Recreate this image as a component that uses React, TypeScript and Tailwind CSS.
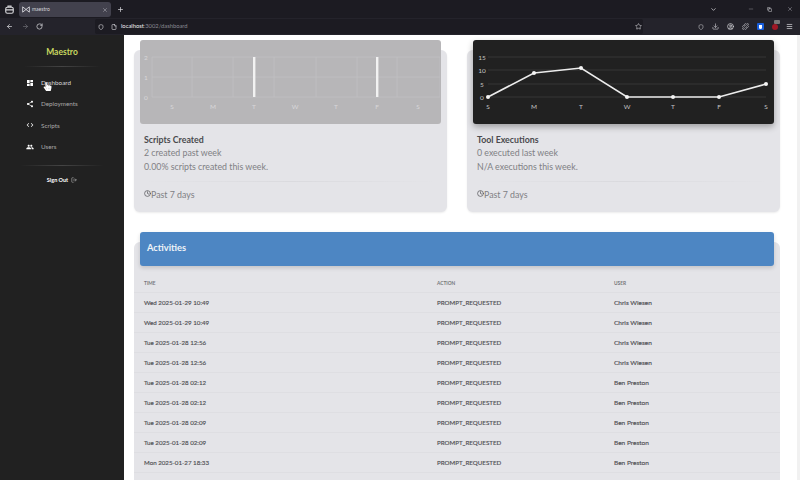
import { ArrowLeft, ArrowRight, RotateCw, Shield, File, Star, Plus, X, ChevronDown, Minus, Copy, Download, Puzzle, Menu, LogOut, Clock, CircleUser } from 'lucide-react';
import { MdDashboard, MdShare, MdCode, MdPeople } from 'react-icons/md';
import { FaHandPointer } from 'react-icons/fa';

const days = ['S', 'M', 'T', 'W', 'T', 'F', 'S'];

const rows = [
    ['Wed 2025-01-29 10:49', 'PROMPT_REQUESTED', 'Chris Wiesen'],
    ['Wed 2025-01-29 10:49', 'PROMPT_REQUESTED', 'Chris Wiesen'],
    ['Tue 2025-01-28 12:56', 'PROMPT_REQUESTED', 'Chris Wiesen'],
    ['Tue 2025-01-28 12:56', 'PROMPT_REQUESTED', 'Chris Wiesen'],
    ['Tue 2025-01-28 02:12', 'PROMPT_REQUESTED', 'Ben Preston'],
    ['Tue 2025-01-28 02:12', 'PROMPT_REQUESTED', 'Ben Preston'],
    ['Tue 2025-01-28 02:09', 'PROMPT_REQUESTED', 'Ben Preston'],
    ['Tue 2025-01-28 02:09', 'PROMPT_REQUESTED', 'Ben Preston'],
    ['Mon 2025-01-27 18:33', 'PROMPT_REQUESTED', 'Ben Preston'],
    ['Mon 2025-01-27 18:31', 'DEPLOYMENT_MODIFIED', 'Ben Preston'],
];

const navItems = [
    { label: 'Dashboard', Icon: MdDashboard },
    { label: 'Deployments', Icon: MdShare },
    { label: 'Scripts', Icon: MdCode },
    { label: 'Users', Icon: MdPeople },
];

function BrowserChrome() {
    return (
        <div className="h-[35px] shrink-0 bg-[#1c1b22] text-[#d6d6da]">
            <div className="h-[18px] flex items-center">
                <div className="w-[19px] flex justify-center">
                    <svg width="9" height="9" viewBox="0 0 12 12" fill="none" stroke="#d6d6da" strokeWidth="1.5">
                        <rect x="1" y="3" width="10" height="8" rx="2" />
                        <path d="M4 3V1.5h4V3M1 6.5h10" />
                    </svg>
                </div>
                <div className="w-[92px] h-[15px] mt-[1px] bg-[#42414d] rounded-[3px] flex items-center px-[3px] gap-[2px]">
                    <svg width="8" height="7" viewBox="0 0 12 10" fill="none" stroke="#e8e8ec" strokeWidth="1.2">
                        <path d="M1 1v8l10-8v8z" />
                    </svg>
                    <span className="text-[5px] flex-1">maestro</span>
                    <X size={6} strokeWidth={2} className="text-[#b9b9c0]" />
                </div>
                <Plus size={7} strokeWidth={2.5} className="ml-[6px]" />
                <div className="flex-1" />
                <ChevronDown size={7} strokeWidth={2.5} className="mr-[31px]" />
                <Minus size={6} className="mr-[13px] text-[#8f8f96]" />
                <Copy size={5} strokeWidth={2.5} className="mr-[15px]" />
                <X size={6} className="mr-[7px] text-[#a5a5ac]" />
            </div>
            <div className="h-[17px] bg-[#24232b] flex items-center">
                <ArrowLeft size={7} strokeWidth={2.5} className="ml-[6px]" />
                <ArrowRight size={7} strokeWidth={2.5} className="ml-[9px] text-[#6c6b72]" />
                <RotateCw size={7} strokeWidth={2.5} className="ml-[7px]" />
                <div className="ml-[52px] w-[548px] h-[15px] bg-[#1c1b22] rounded-[2px] flex items-center px-[3px]">
                    <Shield size={6} strokeWidth={2.5} />
                    <File size={6} strokeWidth={2.5} className="ml-[7px]" />
                    <span className="ml-[4px] text-[5.8px] text-[#f0f0f2]">
                        localhost<span className="text-[#8a8a92]">:3002/dashboard</span>
                    </span>
                    <div className="flex-1" />
                    <Star size={7} strokeWidth={2} className="mr-[-2px]" />
                </div>
                <div className="flex-1 flex items-center justify-end gap-[8px] pr-[7px]">
                    <Shield size={6} strokeWidth={2.5} className="text-[#b8b8be]" />
                    <Download size={7} strokeWidth={2} />
                    <CircleUser size={7} strokeWidth={2.5} />
                    <Puzzle size={7} strokeWidth={2} />
                    <div className="w-[7px] h-[7px] rounded-[1px] bg-[#175ddc] flex items-center justify-center">
                        <div className="w-[3px] h-[4px] bg-white rounded-b-[2px]" />
                    </div>
                    <div className="relative w-[6px] h-[6px] rounded-full bg-[#a01825]">
                        <div className="absolute -top-[4px] left-[2px] w-[6px] h-[4px] bg-[#777] rounded-[1px]" />
                    </div>
                    <Menu size={7} strokeWidth={2.5} />
                </div>
            </div>
        </div>
    );
}

function Sidebar() {
    return (
        <aside className="relative w-[124px] shrink-0 bg-[#212121] text-white">
            <div className="pt-[11px] text-center text-[8.5px] font-bold text-[#c8d860] leading-[12px]">Maestro</div>
            <div className="mx-[24px] mt-[8px] h-px bg-linear-to-r from-transparent via-[#444444] to-transparent" />
            <nav className="mt-[5px] flex flex-col pl-[26px]">
                {navItems.map(({ label, Icon }) => (
                    <div key={label} className="h-[21.3px] flex items-center gap-[7px]">
                        <Icon size={8} className="shrink-0" />
                        <span className={`text-[6.3px] ${label === 'Dashboard' ? 'text-[#d8d8d8]' : 'text-[#a8a8a8]'}`}>{label}</span>
                    </div>
                ))}
            </nav>
            <div className="mx-[20px] mt-[8px] h-px bg-linear-to-r from-transparent via-[#444444] to-transparent" />
            <div className="mt-[10px] flex items-center justify-center gap-[3px] text-[5.5px] font-bold">
                Sign Out
                <LogOut size={6} className="text-[#c8c8c8]" />
            </div>
            <FaHandPointer size={9} className="absolute left-[43px] top-[47px] text-white" />
        </aside>
    );
}

function StatCard({ title, lines, chart }: { title: string; lines: string[]; chart: React.ReactNode }) {
    return (
        <div className="mt-[15px] h-[162px] bg-[#e4e4e8] rounded-[6px] shadow-[0_1px_2px_rgba(0,0,0,0.08)] px-[6px]">
            {chart}
            <div className="px-[4px] pt-[10px]">
                <h3 className="text-[8.8px] leading-[12px] font-bold text-[#4a4a4e]">{title}</h3>
                <p className="text-[8.8px] leading-[13.5px] text-[#808084]">{lines[0]}</p>
                <p className="text-[8.8px] leading-[13.5px] text-[#808084]">{lines[1]}</p>
                <div className="mt-[7.5px] h-px bg-linear-to-r from-transparent via-[#dadade] to-transparent" />
                <div className="mt-[6px] flex items-center text-[8.8px] leading-[13px] text-[#808084]">
                    <Clock size={7} strokeWidth={2.5} className="-mt-[2px] text-[#55555a]" />
                    Past 7 days
                </div>
            </div>
        </div>
    );
}

function BarChart() {
    const gridX = [12, 52, 93, 134, 176, 217, 257, 300];
    const labelX = [32, 73, 114, 155, 196, 237, 278];
    return (
        <div className="relative -top-[10px] h-[84px] -mb-[10px] bg-[#b7b6b8] rounded-[3px]">
            <svg width="300" height="84" className="block">
                {[17, 37, 57].map(y => (
                    <line key={y} x1="12" x2="300" y1={y} y2={y} stroke="#c2c1c3" strokeWidth="0.7" />
                ))}
                {gridX.map(x => (
                    <line key={x} x1={x} x2={x} y1="17" y2="57" stroke="#c2c1c3" strokeWidth="0.7" />
                ))}
                <rect x="113" y="17" width="2.4" height="40" fill="#f2f2f2" />
                <rect x="236" y="17" width="2.4" height="40" fill="#f2f2f2" />
                {[['2', 20], ['1', 40], ['0', 60]].map(([t, y]) => (
                    <text key={t} x="6" y={y} fontSize="6.5" fill="#d8d7d9" textAnchor="middle">{t}</text>
                ))}
                {days.map((d, i) => (
                    <text key={i} x={labelX[i]} y="69" fontSize="6.5" fill="#d8d7d9" textAnchor="middle">{d}</text>
                ))}
            </svg>
        </div>
    );
}

function LineChart() {
    const xs = [15, 61, 108, 154, 200, 246, 293];
    const ys = [57, 33, 28, 57, 57, 57, 44];
    const points = xs.map((x, i) => `${x},${ys[i]}`).join(' ');
    return (
        <div className="relative -top-[10px] h-[84px] -mb-[10px] bg-[#212121] rounded-[3px] shadow-[0_3px_6px_rgba(0,0,0,0.3)]">
            <svg width="300" height="84" className="block">
                {[17, 30, 44, 57].map(y => (
                    <line key={y} x1="15" x2="293" y1={y} y2={y} stroke="#3c3c3c" strokeWidth="0.8" />
                ))}
                {[['15', 20], ['10', 33], ['5', 47], ['0', 60]].map(([t, y]) => (
                    <text key={t} x="9" y={y} fontSize="6.5" fill="#c4c4c4" textAnchor="middle">{t}</text>
                ))}
                <polyline points={points} fill="none" stroke="#ececec" strokeWidth="1.6" />
                {xs.map((x, i) => (
                    <circle key={i} cx={x} cy={ys[i]} r="2" fill="#f4f4f4" />
                ))}
                {days.map((d, i) => (
                    <text key={i} x={xs[i]} y="69" fontSize="6.5" fill="#c4c4c4" textAnchor="middle">{d}</text>
                ))}
            </svg>
        </div>
    );
}

function Activities() {
    return (
        <div className="mt-[30px] bg-[#e4e4e8] rounded-[6px]">
            <div className="relative -top-[10px] -mb-[10px] mx-[6px] h-[34px] bg-[#4d86c3] rounded-[3px] flex items-center px-[7px] pb-[3px] text-[9.3px] font-bold text-[#f0f4f8] shadow-[0_2px_4px_rgba(0,0,0,0.15)]">
                Activities
            </div>
            <div className="grid grid-cols-[293px_177px_1fr] pl-[10px] h-[26px] items-center pt-[10px] text-[4.8px] font-bold text-[#77777b] uppercase">
                <span>Time</span>
                <span>Action</span>
                <span>User</span>
            </div>
            {rows.map((row, i) => (
                <div key={i} className="grid grid-cols-[293px_177px_1fr] pl-[10px] h-[20px] items-center border-t border-[#dedee2] text-[6.2px] text-[#505054] [-webkit-text-stroke:0.15px_#505054]">
                    <span>{row[0]}</span>
                    <span>{row[1]}</span>
                    <span className="text-[6.5px]">{row[2]}</span>
                </div>
            ))}
        </div>
    );
}

export default function App() {
    return (
        <div className="w-[800px] h-[480px] overflow-hidden flex flex-col font-['Lato',sans-serif]">
            <BrowserChrome />
            <div className="flex-1 min-h-0 flex bg-white">
                <Sidebar />
                <main className="flex-1 overflow-hidden pl-[10px] pr-[17px]">
                    <div className="grid grid-cols-2 gap-[20px]">
                        <StatCard title="Scripts Created" lines={['2 created past week', '0.00% scripts created this week.']} chart={<BarChart />} />
                        <StatCard title="Tool Executions" lines={['0 executed last week', 'N/A executions this week.']} chart={<LineChart />} />
                    </div>
                    <Activities />
                </main>
                <div className="w-[3px] shrink-0 bg-[#f1f1f1]" />
            </div>
        </div>
    );
}
